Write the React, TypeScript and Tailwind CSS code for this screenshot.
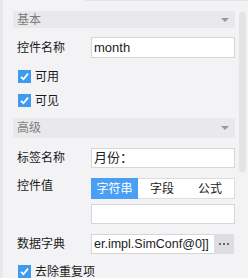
import React from "react"

const font = "font-['Liberation_Sans','Noto_Sans_CJK_SC',sans-serif]"

function SectionHeader({ title }: { title: string }) {
  return (
    <div className="h-[20px] bg-[#e9e9eb] flex items-center justify-between pl-[4px] pr-[6px]">
      <span className="text-[12px] leading-none text-[#7d7d7d]">{title}</span>
      <svg width="8" height="4" viewBox="0 0 8 4">
        <path d="M0 0 H8 L4 4 Z" fill="#9a9a9a" />
      </svg>
    </div>
  )
}

function Check({ label, className = "" }: { label: string; className?: string }) {
  return (
    <div className={`flex items-center h-[13px] pl-[5px] ${className}`}>
      <span className="w-[13px] h-[13px] bg-[#3d9cf2] flex items-center justify-center shrink-0">
        <svg width="11" height="11" viewBox="0 0 11 11">
          <path d="M2 5.8 L4.4 8.2 L9 2.6" fill="none" stroke="#fff" strokeWidth="1.8" />
        </svg>
      </span>
      <span className="ml-[4px] text-[12px] leading-none text-[#1a1a1a]">{label}</span>
    </div>
  )
}

function Field({ label, value, className = "" }: { label: string; value: string; className?: string }) {
  return (
    <div className={`flex items-center ${className}`}>
      <span className="w-[78px] pl-[4px] text-[12px] text-[#1a1a1a] shrink-0">{label}</span>
      <div className="flex-1 h-full bg-white border border-[#d6d6d6] flex items-center px-[2px] text-[13px] text-[#222]">
        {value}
      </div>
    </div>
  )
}

export default function App() {
  return (
    <div className={`relative w-[248px] h-[278px] overflow-hidden bg-[#f3f3f5] flex ${font}`}>
      <div className="absolute top-0 left-[85px] right-0 h-px bg-[#e3e3e5]" />
      <div className="w-[3px] bg-[#e8e8ea] shrink-0" />
      <div className="w-[232px] shrink-0 pl-[10px] pt-[11px] flex flex-col">
        <SectionHeader title="基本" />
        <Field label="控件名称" value="month" className="mt-[9px] h-[21px]" />
        <Check label="可用" className="mt-[12px]" />
        <Check label="可见" className="mt-[11px]" />
        <div className="mt-[11px]">
          <SectionHeader title="高级" />
        </div>
        <Field label="标签名称" value="月份：" className="mt-[10px] h-[20px]" />
        <div className="flex mt-[10px]">
          <span className="w-[78px] pl-[4px] text-[12px] leading-[16px] text-[#1a1a1a] shrink-0">控件值</span>
          <div className="flex-1 flex flex-col">
            <div className="h-[21px] flex border border-[#dcdcdc] bg-white text-[12px]">
              <div className="w-[47px] -m-px mr-0 bg-[#4a9ff5] text-white flex items-center justify-center">字符串</div>
              <div className="w-[48px] flex items-center justify-center text-[#1a1a1a]">字段</div>
              <div className="flex-1 flex items-center justify-center text-[#1a1a1a]">公式</div>
            </div>
            <div className="mt-[5px] h-[20px] bg-white border border-[#d6d6d6]" />
          </div>
        </div>
        <div className="flex items-center mt-[10px] h-[20px]">
          <span className="w-[78px] pl-[4px] text-[12px] text-[#1a1a1a] shrink-0">数据字典</span>
          <div className="w-[123px] h-full bg-white border border-[#d6d6d6] border-r-0 flex items-center pl-[2px] overflow-hidden whitespace-nowrap text-[12.5px] text-[#222]">
            er.impl.SimConf@0]]
          </div>
          <div className="w-[20px] h-full bg-[#dedee0] flex items-center justify-center">
            <svg width="10" height="2" viewBox="0 0 10 2">
              <rect x="0" y="0" width="2" height="2" fill="#6a6a6a" />
              <rect x="4" y="0" width="2" height="2" fill="#6a6a6a" />
              <rect x="8" y="0" width="2" height="2" fill="#6a6a6a" />
            </svg>
          </div>
        </div>
        <Check label="去除重复项" className="mt-[11px]" />
      </div>
      <div className="w-[13px] shrink-0 pl-[4px] pr-[2px] pt-[12px]">
        <div className="w-[7px] h-[160px] rounded-[3px] bg-[#e4e4e6]" />
      </div>
    </div>
  )
}
